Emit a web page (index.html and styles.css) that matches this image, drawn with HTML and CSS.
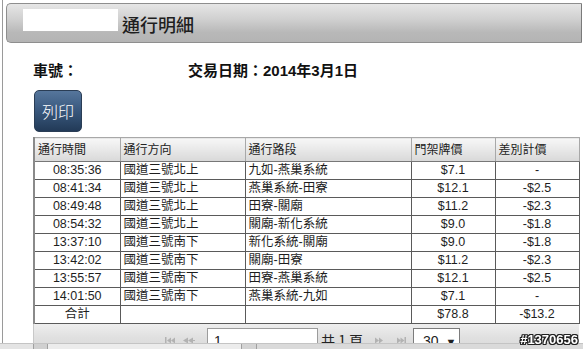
FILE: index.html
```html
<!DOCTYPE html>
<html lang="zh-Hant">
<head>
<meta charset="utf-8">
<title>通行明細</title>
<link rel="stylesheet" href="styles.css">
</head>
<body>
<div class="page">
  <div class="titlebar"><span class="redact"></span><span class="title">通行明細</span></div>
  <div class="info"><span class="plate">車號：</span><span class="date">交易日期：2014年3月1日</span></div>
  <button class="print">列印</button>
  <div class="grid">
    <table>
      <colgroup>
        <col class="c1"><col class="c2"><col class="c3"><col class="c4"><col class="c5">
      </colgroup>
      <thead>
        <tr><th>通行時間</th><th>通行方向</th><th>通行路段</th><th>門架牌價</th><th>差別計價</th></tr>
      </thead>
      <tbody>
        <tr><td class="ctr">08:35:36</td><td>國道三號北上</td><td>九如-燕巢系統</td><td class="ctr">$7.1</td><td class="ctr">-</td></tr>
        <tr><td class="ctr">08:41:34</td><td>國道三號北上</td><td>燕巢系統-田寮</td><td class="ctr">$12.1</td><td class="ctr">-$2.5</td></tr>
        <tr><td class="ctr">08:49:48</td><td>國道三號北上</td><td>田寮-關廟</td><td class="ctr">$11.2</td><td class="ctr">-$2.3</td></tr>
        <tr><td class="ctr">08:54:32</td><td>國道三號北上</td><td>關廟-新化系統</td><td class="ctr">$9.0</td><td class="ctr">-$1.8</td></tr>
        <tr><td class="ctr">13:37:10</td><td>國道三號南下</td><td>新化系統-關廟</td><td class="ctr">$9.0</td><td class="ctr">-$1.8</td></tr>
        <tr><td class="ctr">13:42:02</td><td>國道三號南下</td><td>關廟-田寮</td><td class="ctr">$11.2</td><td class="ctr">-$2.3</td></tr>
        <tr><td class="ctr">13:55:57</td><td>國道三號南下</td><td>田寮-燕巢系統</td><td class="ctr">$12.1</td><td class="ctr">-$2.5</td></tr>
        <tr><td class="ctr">14:01:50</td><td>國道三號南下</td><td>燕巢系統-九如</td><td class="ctr">$7.1</td><td class="ctr">-</td></tr>
        <tr><td class="ctr">合計</td><td></td><td></td><td class="ctr">$78.8</td><td class="ctr">-$13.2</td></tr>
      </tbody>
    </table>
    <div class="pager">
      <svg class="pg-icon first" width="10" height="7" viewBox="0 0 10 7"><rect x="0" y="0" width="1.5" height="7"/><path d="M2 3.5 L6 0.5 V6.5Z"/><path d="M6 3.5 L10 0.5 V6.5Z"/></svg>
      <svg class="pg-icon prev" width="12" height="7" viewBox="0 0 12 7"><path d="M0 3.5 L5 0.5 V6.5Z"/><path d="M5 3.5 L10 0.5 V6.5Z"/><rect x="10" y="3" width="2" height="1"/></svg>
      <span class="pg-input">1</span>
      <span class="pg-total">共 1 頁</span>
      <svg class="pg-icon next" width="10" height="7" viewBox="0 0 10 7"><path d="M0 0.5 L4 3.5 L0 6.5Z"/><path d="M4 0.5 L8 3.5 L4 6.5Z"/></svg>
      <svg class="pg-icon last" width="9" height="7" viewBox="0 0 9 7"><path d="M0 0.5 L4 3.5 L0 6.5Z"/><path d="M3.5 0.5 L7.5 3.5 L3.5 6.5Z"/><rect x="7.5" y="0" width="1.5" height="7"/></svg>
      <span class="pg-select">30 <span class="arrow">▼</span></span>
    </div>
  </div>
</div>
<div class="hscroll"><span class="hs-a"></span><span class="hs-b"></span><span class="hs-c"></span><span class="hs-d"></span></div>
<div class="watermark">#1370656</div>
</body>
</html>
```

FILE: styles.css
```css
html, body {
  margin: 0;
  height: 100%;
  overflow: hidden;
  background: #fff;
}
body {
  font-family: "Liberation Sans", "Noto Sans CJK TC", sans-serif;
  color: #1a1a1a;
}
.page {
  margin-left: 2px;
  border-left: 1px solid #9a9a9a;
  padding: 3px 1px 0 3px;
  height: 100%;
  box-sizing: border-box;
}
.titlebar {
  height: 38px;
  border: 1px solid #8e8e8e;
  border-right-color: #7a7a7a;
  border-radius: 5px 0 0 5px;
  background: linear-gradient(#e6e6e6, #d0d0d0 40%, #b8b8b8 75%, #b4b4b4);
  display: flex;
  align-items: center;
  padding-left: 16px;
}
.redact {
  width: 95px;
  height: 22px;
  background: #fff;
  align-self: flex-start;
  margin-top: 5px;
}
.title {
  margin-left: 4px;
  font-family: "Noto Sans CJK TC", sans-serif;
  font-size: 18px;
  font-weight: 500;
  line-height: 1;
  color: #1e1e1e;
  margin-top: 2px;
}
.info {
  display: flex;
  margin: 18px 0 0 27px;
  font-weight: bold;
  font-size: 15px;
  line-height: 20px;
  color: #111;
}
.plate {
  width: 155px;
}
.print {
  display: block;
  margin: 9px 0 0 28px;
  width: 48px;
  height: 42px;
  border: 1px solid #2a3d55;
  border-radius: 5px;
  background: linear-gradient(#56769c, #3b5a80 45%, #223a57);
  color: #fff;
  font-family: "Noto Sans CJK TC", sans-serif;
  font-size: 16px;
  font-weight: 300;
  line-height: 1;
  padding: 0;
  text-align: center;
}
.grid {
  margin: 5px 0 0 27px;
  width: 546px;
}
table {
  border-collapse: collapse;
  table-layout: fixed;
  width: 546px;
  border-left: 2px solid #8a8a8a;
  border-right: 1px solid #a0a0a0;
  font-size: 12px;
}
.c1 { width: 86px; }
.c2 { width: 125px; }
.c3 { width: 166px; }
.c4 { width: 84px; }
.c5 { width: 84px; }
th {
  height: 23px;
  padding: 0 3px;
  background: linear-gradient(#f7f7f7, #e8e8e8 50%, #d8d8d8);
  border: 1px solid #a8a8a8;
  border-bottom-color: #777;
  font-weight: normal;
  text-align: left;
  color: #222;
  line-height: 14px;
  font-size: 12px;
}
td {
  height: 17px;
  padding: 0 3px;
  border: 1px solid #5a5a5a;
  line-height: 15px;
  font-size: 12.5px;
  color: #1e1e1e;
  white-space: nowrap;
  overflow: hidden;
}
td.ctr {
  text-align: center;
}
.pager {
  height: 30px;
  background: linear-gradient(#eeeeee, #e0e0e0 40%, #d6d6d6);
  border-left: 1px solid #c8c8c8;
  display: flex;
  align-items: flex-start;
  padding: 4px 0 0 131px;
  font-family: "Noto Sans CJK TC", sans-serif;
  font-size: 14px;
  color: #222;
}
.pg-icon {
  fill: #b2b2b2;
  margin-top: 9px;
}
.prev {
  margin-left: 8px;
}
.pg-input {
  margin-left: 12px;
  width: 103px;
  height: 20px;
  padding-left: 6px;
  background: #fff;
  border: 1px solid #9c9c9c;
  font-family: "Liberation Sans", sans-serif;
  line-height: 24px;
}
.pg-total {
  margin-left: 3px;
  line-height: 24px;
}
.next {
  margin-left: 12px;
}
.last {
  margin-left: 12px;
}
.pg-select {
  margin-left: 7px;
  width: 36px;
  height: 20px;
  padding-left: 9px;
  background: #fff;
  border: 1px solid #7c7c7c;
  font-family: "Liberation Sans", sans-serif;
  line-height: 24px;
}
.arrow {
  font-size: 11px;
  margin-left: 3px;
}
.hscroll {
  position: fixed;
  left: 0;
  right: 0;
  bottom: 0;
  height: 5px;
  border-top: 1px solid #c4c4c4;
  background: #dadada;
  display: flex;
}
.hscroll span {
  display: block;
  height: 5px;
}
.hs-a { width: 33px; border-right: 1px solid #a0a0a0; background: #e4e4e4; }
.hs-b { width: 13px; border-right: 1px solid #a0a0a0; background: #d0d0d0; }
.hs-c { width: 193px; border-right: 1px solid #a0a0a0; background: #ececec; }
.hs-d { width: 14px; border-right: 1px solid #a0a0a0; background: #d4d4d4; }
.watermark {
  position: fixed;
  right: 5px;
  bottom: 2px;
  font-family: "Liberation Sans", sans-serif;
  font-weight: bold;
  font-size: 13px;
  line-height: 14px;
  color: #fff;
  text-shadow: 1px 0 0 #222, -1px 0 0 #222, 0 1px 0 #222, 0 -1px 0 #222, 1px 1px 0 #222, -1px -1px 0 #222, 1px -1px 0 #222, -1px 1px 0 #222;
}
```
